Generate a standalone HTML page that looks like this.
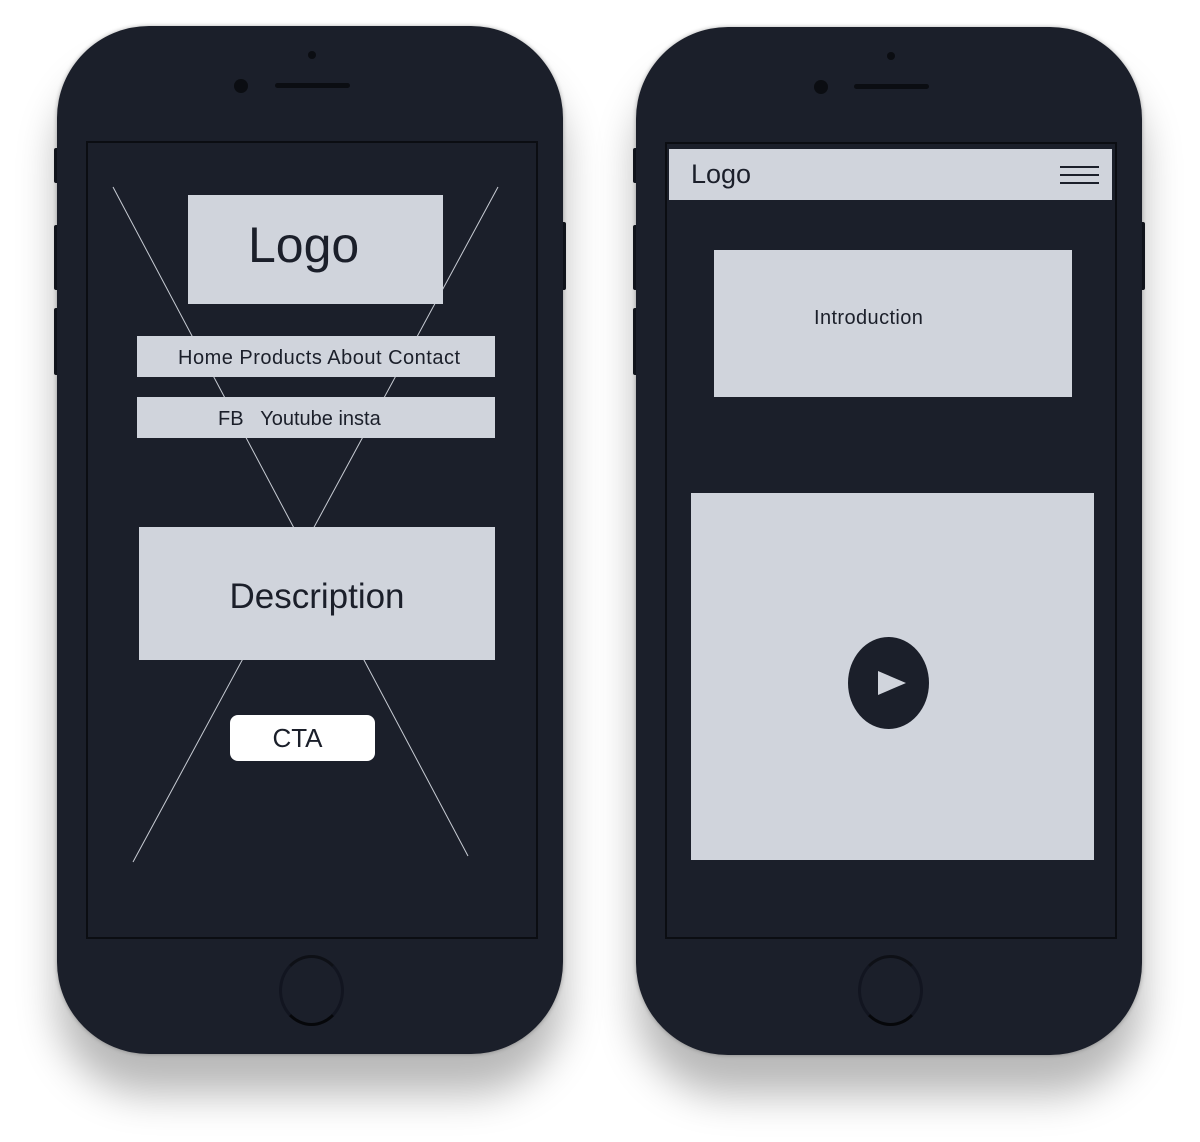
<!DOCTYPE html>
<html><head><style>
body{margin:0;width:1200px;height:1142px;background:#fff;position:relative;overflow:hidden;font-family:"Liberation Sans",sans-serif;color:#1b1f2a}
.a{position:absolute}
.phone{position:absolute;width:506px;height:1028px;border-radius:92px;background:#1b1f2a;box-shadow:0 40px 40px rgba(0,0,0,.28),0 0 4px rgba(0,0,0,.3)}
.btn{position:absolute;width:5px;background:#151922;border-radius:2px}
.screen{position:absolute;background:#1b1f2a;border:2px solid #0b0d12}
.box{position:absolute;background:#d0d4dc;display:flex;align-items:center;justify-content:center;color:#1b1f2a}
.home{position:absolute;width:59px;height:65px;border-radius:50%;border:3px solid #121520;border-bottom-color:#06070a;border-top-color:#0e1016}
</style></head><body>
<div class="btn" style="left:54px;top:148px;height:35px"></div>
<div class="btn" style="left:54px;top:225px;height:65px"></div>
<div class="btn" style="left:54px;top:308px;height:67px"></div>
<div class="btn" style="left:561px;top:222px;height:68px"></div>
<div class="btn" style="left:633px;top:148px;height:35px"></div>
<div class="btn" style="left:633px;top:225px;height:65px"></div>
<div class="btn" style="left:633px;top:308px;height:67px"></div>
<div class="btn" style="left:1140px;top:222px;height:68px"></div>

<div class="phone" style="left:57px;top:26px"></div>
<div class="phone" style="left:636px;top:27px"></div>

<!-- left phone details -->
<div class="a" style="left:308px;top:51px;width:8px;height:8px;border-radius:50%;background:#0b0d12"></div>
<div class="a" style="left:234px;top:79px;width:14px;height:14px;border-radius:50%;background:#0b0d12"></div>
<div class="a" style="left:275px;top:83px;width:75px;height:5px;border-radius:3px;background:#0b0d12"></div>
<div class="screen" style="left:86px;top:141px;width:448px;height:794px"></div>
<svg class="a" style="left:0;top:0" width="1200" height="1142"><line x1="113" y1="187" x2="468" y2="856" stroke="#c8ccd4" stroke-width="1"/><line x1="498" y1="187" x2="133" y2="862" stroke="#c8ccd4" stroke-width="1"/></svg>
<div class="box" style="left:188px;top:195px;width:255px;height:109px;font-size:50px;box-sizing:border-box;justify-content:flex-start;padding-left:60px;padding-bottom:10px">Logo</div>
<div class="box" style="left:137px;top:336px;width:358px;height:41px;font-size:20px;justify-content:flex-start;padding-left:41px;padding-top:4px;box-sizing:border-box;letter-spacing:0.5px">Home Products About Contact</div>
<div class="box" style="left:137px;top:397px;width:358px;height:41px;font-size:20px;justify-content:flex-start;padding-left:81px;padding-top:4px;box-sizing:border-box">FB&nbsp;&nbsp;&nbsp;Youtube insta</div>
<div class="box" style="left:139px;top:527px;width:356px;height:133px;font-size:35px;padding-top:6px;box-sizing:border-box">Description</div>
<div class="box" style="left:230px;top:715px;width:145px;height:46px;background:#fff;border-radius:8px;font-size:26px;padding-right:10px;box-sizing:border-box">CTA</div>
<div class="home" style="left:279px;top:955px"></div>

<!-- right phone -->
<div class="a" style="left:887px;top:52px;width:8px;height:8px;border-radius:50%;background:#0b0d12"></div>
<div class="a" style="left:814px;top:80px;width:14px;height:14px;border-radius:50%;background:#0b0d12"></div>
<div class="a" style="left:854px;top:84px;width:75px;height:5px;border-radius:3px;background:#0b0d12"></div>
<div class="screen" style="left:665px;top:142px;width:448px;height:793px"></div>
<div class="box" style="left:669px;top:149px;width:443px;height:51px;font-size:27px;justify-content:flex-start;padding-left:22px;box-sizing:border-box">Logo</div>
<div class="a" style="left:1060px;top:166px;width:39px;height:2px;background:#1b1f2a"></div>
<div class="a" style="left:1060px;top:174px;width:39px;height:2px;background:#1b1f2a"></div>
<div class="a" style="left:1060px;top:182px;width:39px;height:2px;background:#1b1f2a"></div>
<div class="box" style="left:714px;top:250px;width:358px;height:147px;font-size:20px;align-items:flex-start;padding-top:57px;box-sizing:border-box;justify-content:flex-start;padding-left:100px;letter-spacing:0.4px">Introduction</div>
<div class="box" style="left:691px;top:493px;width:403px;height:367px"></div>
<div class="a" style="left:848px;top:637px;width:81px;height:92px;border-radius:50%;background:#1b1f2a"></div>
<svg class="a" style="left:876px;top:669px" width="32" height="28"><polygon points="2,2 30,14 2,26" fill="#d0d4dc"/></svg>
<div class="home" style="left:858px;top:955px"></div>
</body></html>
